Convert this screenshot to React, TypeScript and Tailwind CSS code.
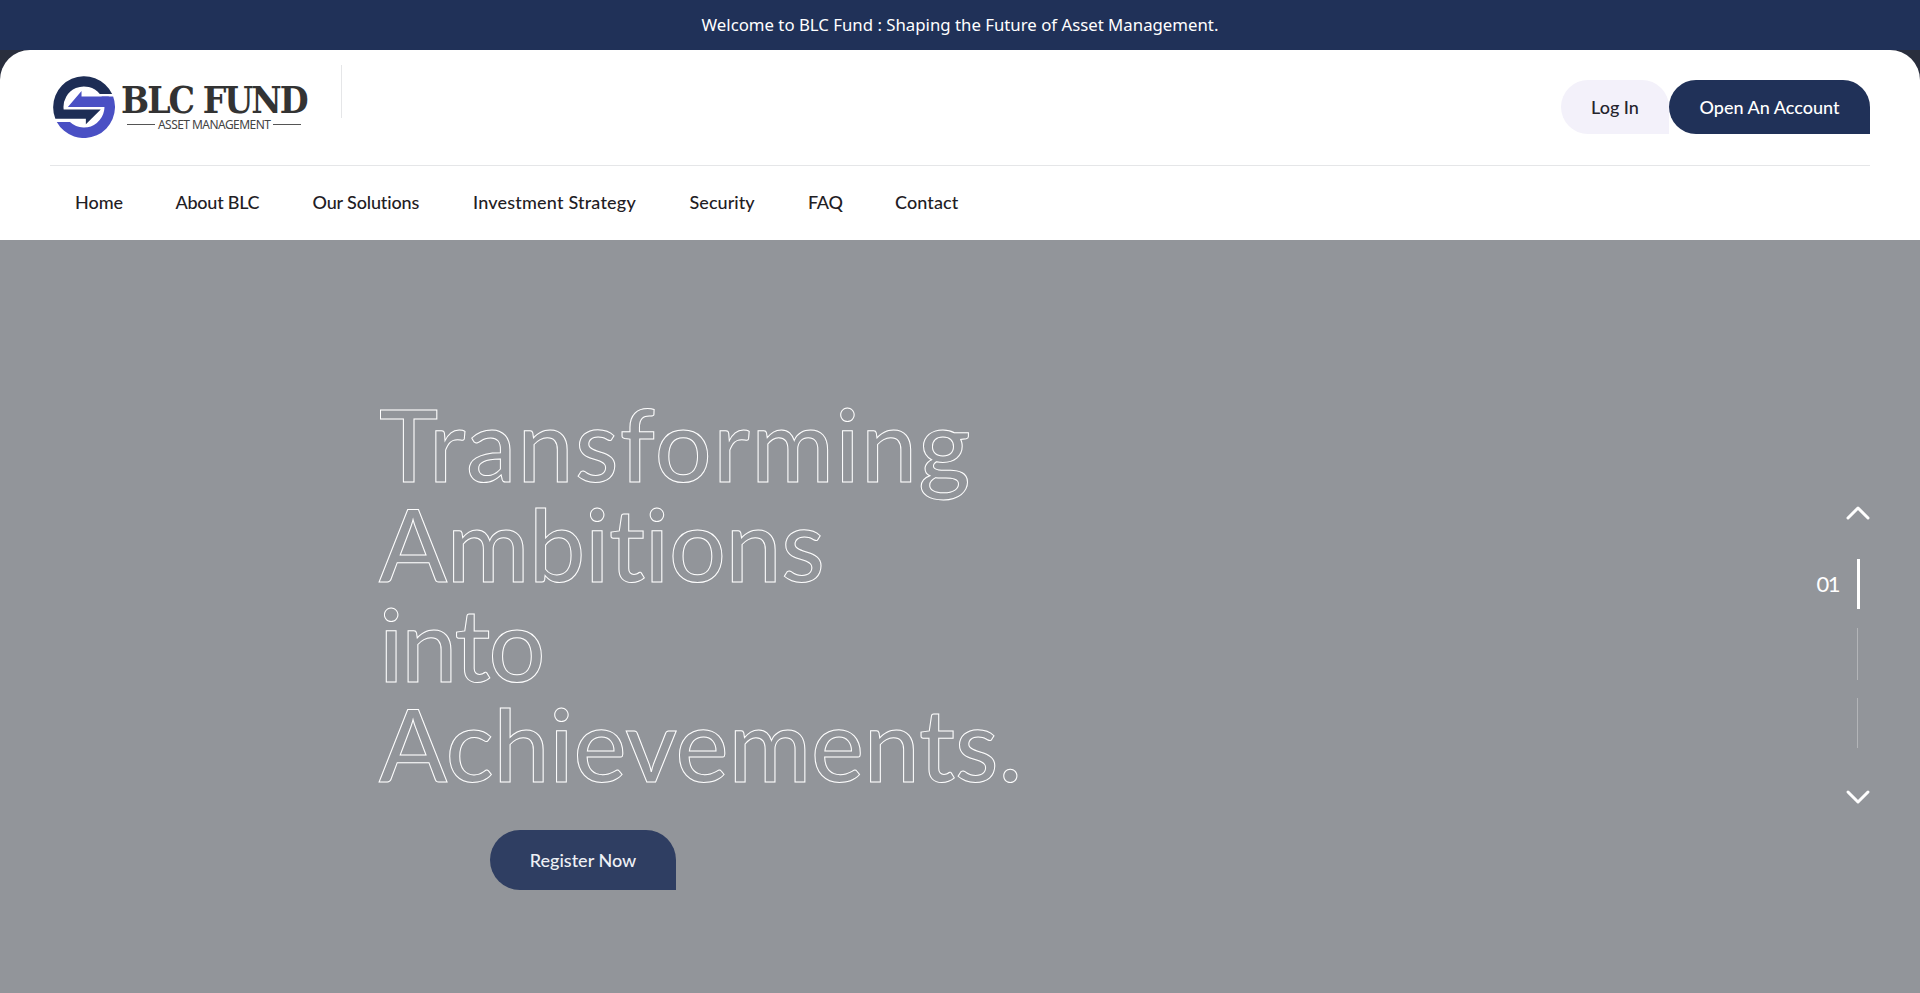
import { ChevronUp, ChevronDown } from "lucide-react";

const navItems = [
  { label: "Home", className: "w-[100.5px]" },
  { label: "About BLC", className: "w-[137px] tracking-[-0.25px]" },
  { label: "Our Solutions", className: "w-[160.5px] tracking-[-0.15px]" },
  { label: "Investment Strategy", className: "w-[216.5px] tracking-[0.2px]" },
  { label: "Security", className: "w-[118.5px] tracking-[0.05px]" },
  { label: "FAQ", className: "w-[87px] tracking-[-0.3px]" },
  { label: "Contact", className: "tracking-[0.1px]" },
];

const heroLines = [
  { text: "Transforming", className: "tracking-[1.4px]" },
  { text: "Ambitions", className: "tracking-[-0.3px]" },
  { text: "into", className: "tracking-[-2px]" },
  { text: "Achievements.", className: "tracking-[-0.1px]" },
];

function LogoMark() {
  return (
    <svg viewBox="0 0 100 100" className="h-[62px] w-[62px] shrink-0">
      <path fill="#4a50c4" d="M97 33A50 50 0 0 1 6.1 74L27.4 74A33 33 0 0 0 78.3 33Z" />
      <path fill="#4a50c4" d="M24 50 46 24 46 33 90 33 90 50Z" />
      <path fill="#1d2d55" d="M95.4 29A50 50 0 0 0 3.8 69L53 69 53 78 77 54 17.2 54A33 33 0 0 1 75.5 29Z" />
    </svg>
  );
}

export default function App() {
  return (
    <div className="h-[993px] w-full overflow-hidden bg-[#92959a] font-['Lato',sans-serif]">
      <div className="flex h-[50px] items-center justify-center bg-[#203158] font-['Noto_Sans',sans-serif] text-[16.8px] text-white">
        Welcome to BLC Fund : Shaping the Future of Asset Management.
      </div>

      <div className="bg-[#292e3d]">
        <header className="h-[190px] rounded-t-[30px] bg-white px-[50px]">
          <div className="flex h-[116px] items-center justify-between border-b border-[#e5e6e8] pb-px">
            <div className="flex items-center">
              <div className="flex h-full items-center pl-[3px]">
                <LogoMark />
                <div className="ml-[6px] w-[190px]">
                  <div className="font-['DejaVu_Serif_Condensed','DejaVu_Serif',serif] text-[37px] leading-[35px] font-bold tracking-[-2px] whitespace-nowrap text-[#333333]">
                    BLC FUND
                  </div>
                  <div className="flex items-center gap-[3px] pl-[6px] font-['Noto_Sans',sans-serif] text-[12px] leading-[14px] tracking-[-0.55px] text-[#444444]">
                    <span className="h-px w-[28px] bg-[#555555]" />
                    <span className="whitespace-nowrap">ASSET MANAGEMENT</span>
                    <span className="h-px w-[28px] bg-[#555555]" />
                  </div>
                </div>
              </div>
              <div className="mb-[31px] ml-[30px] h-[53px] w-px bg-[#e5e6e8]" />
            </div>

            <div className="flex items-center text-[18px] font-medium">
              <button className="h-[54px] w-[108px] rounded-[30px] rounded-br-none bg-[#f3f1fa] text-[#24242c]">
                Log In
              </button>
              <button className="h-[54px] w-[201px] rounded-[30px] rounded-br-none bg-[#203158] text-white">
                Open An Account
              </button>
            </div>
          </div>

          <nav className="flex h-[74px] items-center pb-px pl-[25px] text-[18px] font-medium text-[#1f2024]">
            {navItems.map((item) => (
              <a key={item.label} href="#" className={`whitespace-nowrap ${item.className}`}>
                {item.label}
              </a>
            ))}
          </nav>
        </header>
      </div>

      <main className="relative h-[753px]">
        <div className="pt-[153px] pl-[379px]">
          <h1 className="text-[100px] leading-[100px] font-medium text-transparent [-webkit-text-stroke:1px_#ffffff]">
            {heroLines.map((line) => (
              <div key={line.text} className={line.className}>
                {line.text}
              </div>
            ))}
          </h1>
          <button className="mt-[37px] ml-[111px] h-[60px] w-[186px] rounded-[30px] rounded-br-none bg-[#2f3e62] text-[18px] font-medium text-[#eef0f5]">
            Register Now
          </button>
        </div>

        <div className="absolute top-[253px] right-[42px] flex flex-col items-center text-white">
          <ChevronUp className="h-10 w-10" strokeWidth={1.8} />
          <div className="relative mt-[26px] ml-px h-[50px] w-[3px] bg-white">
            <span className="absolute top-[11px] right-[21px] text-[22px] leading-[28px] tracking-[-1.5px]">01</span>
          </div>
          <div className="mt-[19px] -ml-px h-[52px] w-px bg-white/30" />
          <div className="mt-[18px] -ml-px h-[50px] w-px bg-white/30" />
          <ChevronDown className="mt-[29px] h-10 w-10" strokeWidth={1.8} />
        </div>
      </main>
    </div>
  );
}
